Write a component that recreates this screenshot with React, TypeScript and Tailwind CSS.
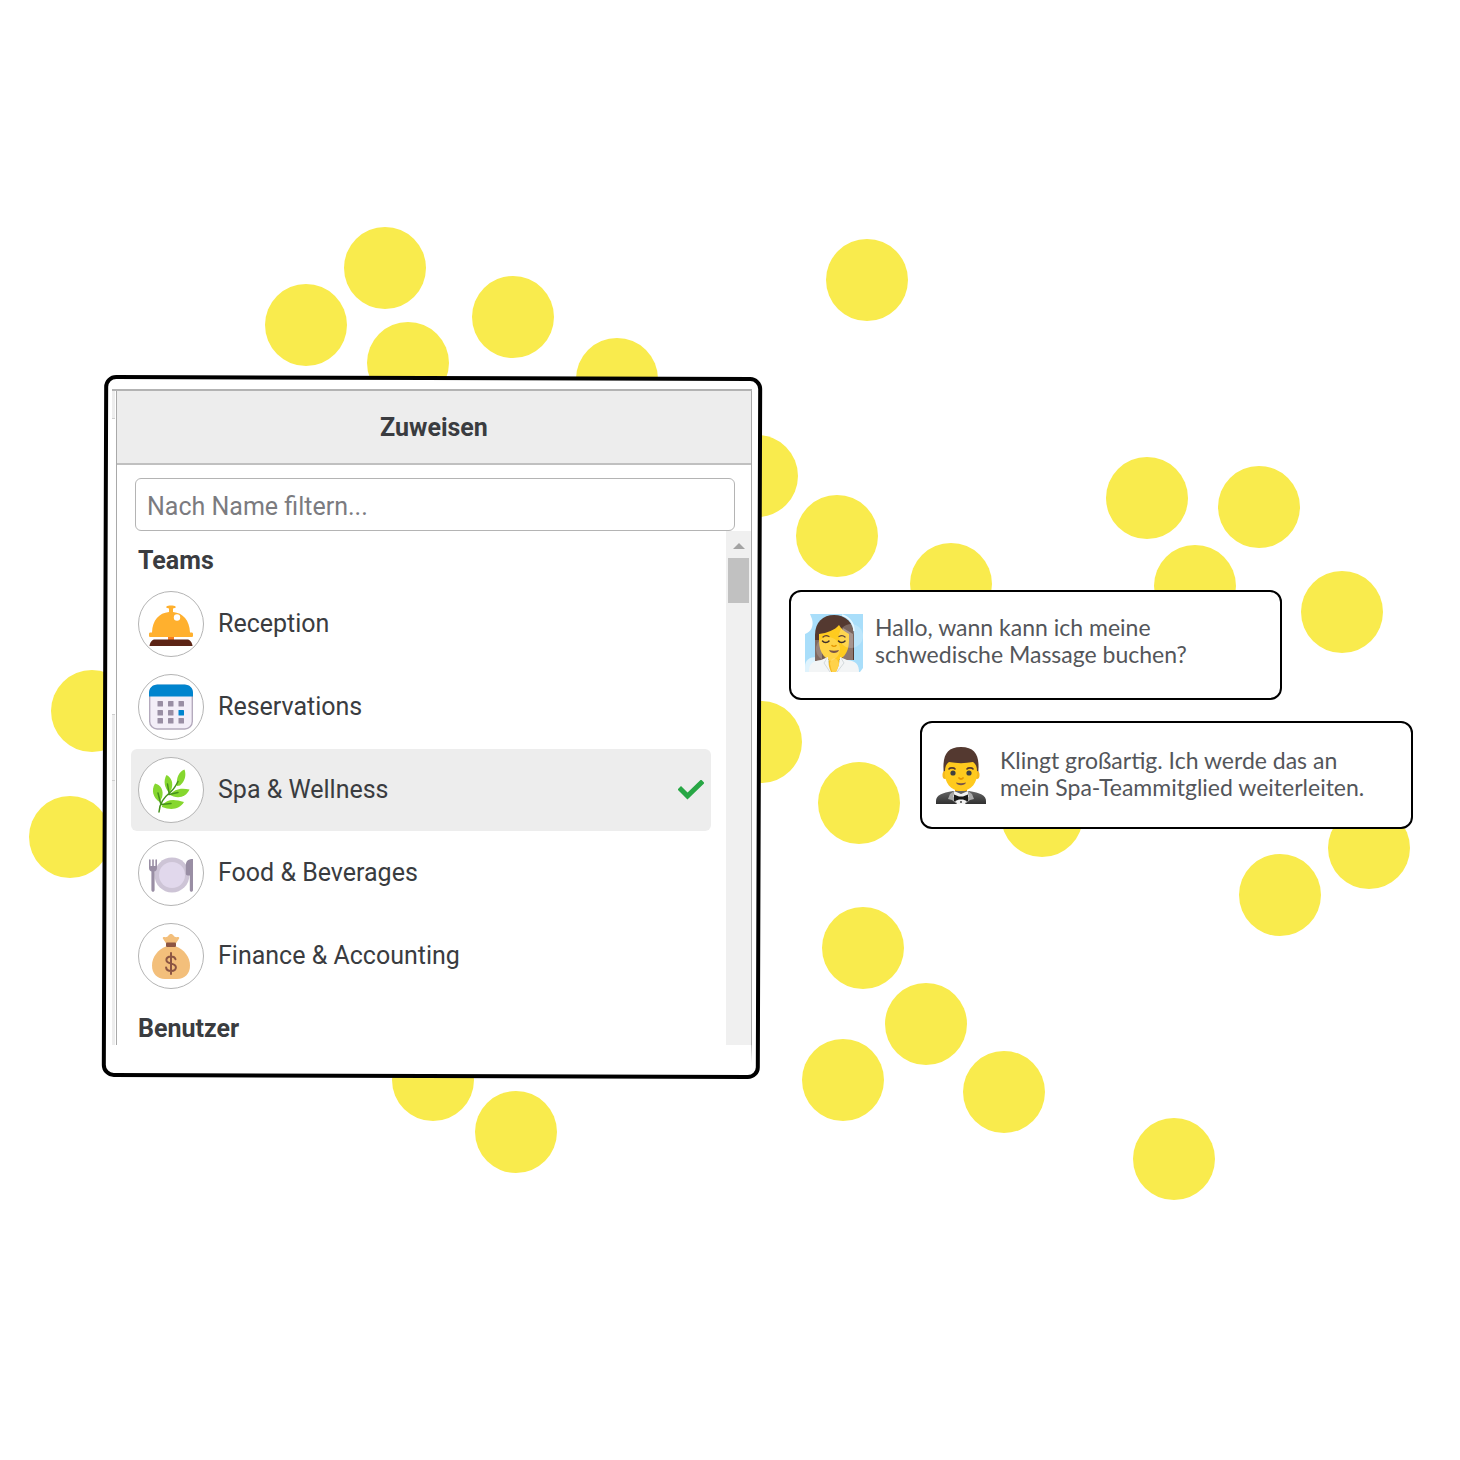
import { useState } from 'react'
import type { ReactNode } from 'react'

const dots = [
  [385, 268], [306, 325], [408, 363], [513, 317], [617, 379], [867, 280], [757, 476],
  [837, 536], [951, 584], [1147, 498], [1259, 507], [1195, 586], [1342, 612], [92, 711],
  [70, 837], [761, 742], [859, 803], [1042, 816], [1280, 895], [1369, 848], [863, 948],
  [926, 1024], [843, 1080], [1004, 1092], [1174, 1159], [433, 1080], [516, 1132],
]

function BellIcon() {
  return (
    <svg viewBox="0 0 44 44" className="size-11" aria-hidden="true">
      <path d="M19 34h6v5h-6z" fill="#f57c20" />
      <path d="M5 37.500h34c2 0 4.500 4 4.500 6.500H.5c0-2.500 2.500-6.500 4.500-6.500z" fill="#5c2415" />
      <path
        d="M17.500 4.500c1.500-1.300 7.500-1.300 9 0 .6.600.2 1.300-.8 1.500l-1.700.5v3.500c10 1 16.500 8 17 20.500h1.500c1 0 1.500.5 1.500 1.500v1.500c0 1-.5 1.500-1.500 1.500h-41C.5 35 0 34.500 0 33.500V32c0-1 .5-1.500 1.500-1.500H3C3.500 18 10 11 20 10V6.500L18.300 6c-1-.2-1.400-.9-.8-1.500z"
        fill="#ffb02e"
      />
      <circle cx="28" cy="15.500" r="3.200" fill="#fff" />
    </svg>
  )
}

function CalendarIcon() {
  return (
    <svg viewBox="0 0 44 46" className="h-[46px] w-11" aria-hidden="true">
      <rect x=".7" y="1.500" width="42.600" height="43.500" rx="7.500" fill="#f3eef8" stroke="#b4aabd" strokeWidth="1.400" />
      <path d="M0 12.500V9c0-5 3.500-8.500 8.500-8.500h27C40.500.5 44 4 44 9v3.500z" fill="#0084ce" />
      {[17, 26, 34].map((y) =>
        [8.5, 19, 29.5].map((x) => (
          <rect key={`${x}-${y}`} x={x} y={y} width="5.500" height="5.500" rx=".6" fill={x === 29.5 && y === 26 ? '#0084ce' : '#998ea4'} />
        )),
      )}
    </svg>
  )
}

function HerbIcon() {
  return (
    <svg viewBox="0 0 44 48" className="h-12 w-11" aria-hidden="true">
      <g fill="#86d72f">
        <path d="M10.500 36C4 32 2 24 6 17.500c6 1.500 9 7 7 14z" />
        <path d="M20.500 27c-5-5-6.500-12-3-18 5 2.500 7 8 5 14z" />
        <path d="M28 20c-1-8 1.500-14 7.500-16.500 2 5.500.5 11.500-4.500 16z" />
        <path d="M21 29c4-5.500 10-7.500 19.500-5.500-3 6.500-9 9-16 7z" />
        <path d="M13 39.500c5-6 11-7 22-3.500-4.500 7.500-13 8.500-22 5z" />
      </g>
      <path d="M10 46c.5-9 5-14.500 12-20.500 3.500-3 5-6 7-10M9 27l2.500 10M18.500 18l1.500 9M20 28.500l9-2M12 38.500l10-1" fill="none" stroke="#44911b" strokeWidth="1.500" strokeLinecap="round" />
    </svg>
  )
}

function PlateIcon() {
  return (
    <svg viewBox="0 0 44 40" className="h-10 w-11" aria-hidden="true">
      <circle cx="23" cy="22" r="17.500" fill="#cdc4d6" />
      <circle cx="23" cy="22" r="13" fill="#e1d8ec" />
      <path d="M0 7c0-1 1.600-1 1.600 0v6h1.600V7c0-1 1.600-1 1.600 0v6h1.600V7c0-1 1.600-1 1.600 0v8c0 1.800-1 3-2.400 3.500V37c0 2.400-3.200 2.400-3.200 0V18.500C1 18 0 16.800 0 15z" fill="#998ea4" />
      <path d="M44 37c0 2.400-3.200 2.400-3.200 0V22.500h-2c-1.300 0-2-.8-2-2v-7C36.800 8 38.500 6 44 6z" fill="#998ea4" />
    </svg>
  )
}

function MoneyBagIcon() {
  return (
    <svg viewBox="0 0 38 45" className="h-[45px] w-[38px]" aria-hidden="true">
      <path d="M12 3c2 .3 3.500.2 4.500-1.500 1.200-2 3.800-2 5 0C22.500 3.200 24 3.300 26 3c1.300-.2 1.600 1 .8 2l-3.300 5h-9l-3.300-5C10.400 4 10.700 2.800 12 3z" fill="#f3bf7b" />
      <path d="M14 12.500h10C32 15.500 38 23 38 31.500 38 39.500 33 45 25 45H13C5 45 0 39.500 0 31.500 0 23 6 15.500 14 12.500z" fill="#f3bf7b" />
      <rect x="14" y="8.500" width="10" height="4.500" rx="1" fill="#8c5543" />
      <path d="M23.500 25.200c-.5-1.700-2.300-2.700-4.500-2.700-2.700 0-4.600 1.300-4.600 3.500 0 5 9.500 2.200 9.500 7.300 0 2.300-2 3.700-4.800 3.700s-4.700-1.300-5-3.500M19 19v21" fill="none" stroke="#8c5543" strokeWidth="2" strokeLinecap="round" />
    </svg>
  )
}

function SpaGuest() {
  return (
    <svg viewBox="0 0 58 58" className="size-[58px] shrink-0" aria-hidden="true">
      <path d="M5 0h53v54l-3 4H0V20C6 18 9 12 7 5z" fill="#a9defa" />
      <path d="M0 53c0-7 4-10 12-10v15H0z" fill="#dff3fd" />
      <path d="M10 46V21C10 8 18 1 29 1s20 7 20 20v25z" fill="#543930" />
      <path d="M48 20v26H38V14z" fill="#8d7770" />
      <path d="M10 26h7v21h-7z" fill="#806961" />
      <path d="M24 39h10l1 19H23z" fill="#f5b91f" />
      <path d="M14 20c8-1 16-4 20-9 2 4 6 7 10 9v7c0 12-7 20-15 20S14 39 14 27z" fill="#ffcb1f" />
      <path d="M4 58c0-8 3-11 12-12l7-3c0 6 1 11 3 15zM54 58c0-8-3-11-12-12l-7-3c0 6-2 11-4 15z" fill="#f3f5f6" />
      <path d="M22 44l-3 5 6 9M36 44l3 5-7 9" fill="none" stroke="#d3d9dc" strokeWidth="1" />
      <path d="M25 50c0-3 1-5 4-6 3 1 5 3 5 7l-3 7h-4z" fill="#ffd24a" />
      <circle cx="46" cy="22" r="12" fill="#fff" opacity=".22" />
      <circle cx="23" cy="35" r="12" fill="#fff" opacity=".18" />
      <path d="M18 23c1.500-1.500 4-1.700 6-.5M34 22.500c2-1.200 4.500-1 6 .5" fill="none" stroke="#5d4037" strokeWidth="1.300" strokeLinecap="round" />
      <path d="M17.500 27c1.500 2 5 2 6.500 0M33.500 27c1.500 2 5 2 6.500 0" fill="none" stroke="#3f312b" strokeWidth="1.500" strokeLinecap="round" />
      <path d="M27 31.500c1 1 3 1 4 0" fill="none" stroke="#e59600" strokeWidth="1.600" strokeLinecap="round" />
      <path d="M24 36c3 1 7 1 10 0-1 4-9 4-10 0z" fill="#795548" />
      <path d="M37 1c7 2 12 8 12 16" fill="none" stroke="#e9f8ff" strokeWidth="1.500" />
    </svg>
  )
}

function Concierge() {
  return (
    <svg viewBox="0 0 50 57" className="h-[57px] w-[50px] shrink-0" aria-hidden="true">
      <defs>
        <linearGradient id="suit" x1="0" y1="0" x2="0" y2="1">
          <stop offset="0" stopColor="#666" />
          <stop offset="1" stopColor="#303030" />
        </linearGradient>
      </defs>
      <path d="M8 28C6 11 9 0 25 0s19 11 17 28z" fill="#543930" />
      <path d="M19 38h12v12H19z" fill="#e59600" />
      <ellipse cx="9" cy="28" rx="2.500" ry="4" fill="#f5b91f" />
      <ellipse cx="41" cy="28" rx="2.500" ry="4" fill="#f5b91f" />
      <path d="M9 24c0-4 1-7 4-9 8 1.500 16 1.500 24 0 3 2 4 5 4 9 1 12-6 20-16 20S8 36 9 24z" fill="#ffca1e" />
      <path d="M13 22c1-1.500 5-1.500 6 0M31 22c1-1.500 5-1.500 6 0" fill="none" stroke="#543930" strokeWidth="1.600" strokeLinecap="round" />
      <circle cx="17" cy="26" r="2.600" fill="#404040" />
      <circle cx="33" cy="26" r="2.600" fill="#404040" />
      <path d="M23 31c1 1.300 3 1.300 4 0" fill="none" stroke="#e59600" strokeWidth="1.800" strokeLinecap="round" />
      <path d="M20 35.500c3 1 7 1 10 0-1 3.700-9 3.700-10 0z" fill="#795548" />
      <path d="M0 57v-3c0-6 6-8 17-10h16c11 2 17 4 17 10v3z" fill="url(#suit)" />
      <path d="M18 44l7 3 7-3 1 6-4 7h-8l-4-7z" fill="#f3f3f3" />
      <path d="M18 44l-4 3-2 5 4 1 5 4-4-8zM32 44l4 3 2 5-4 1-5 4 4-8z" fill="#a9a9a9" />
      <path d="M18 47.500l5 2h4l5-2v7l-5-2h-4l-5 2z" fill="#181818" />
      <circle cx="25" cy="55" r="1" fill="#444" />
    </svg>
  )
}

const teams: { name: string; icon: ReactNode }[] = [
  { name: 'Reception', icon: <BellIcon /> },
  { name: 'Reservations', icon: <CalendarIcon /> },
  { name: 'Spa & Wellness', icon: <HerbIcon /> },
  { name: 'Food & Beverages', icon: <PlateIcon /> },
  { name: 'Finance & Accounting', icon: <MoneyBagIcon /> },
]

function AssignPanel() {
  const [selected, setSelected] = useState('Spa & Wellness')
  const [filter, setFilter] = useState('')

  const visible = teams.filter((t) => t.name.toLowerCase().includes(filter.toLowerCase()))

  return (
    <section className="relative w-full max-w-[660px] px-2.5 pt-[13px] pb-[33px] font-[Roboto,sans-serif] text-[25px] text-[#3a3c40]">
      {/* Slightly tilted frame behind the panel */}
      <div className="absolute inset-x-px inset-y-0 rotate-[0.2deg] rounded-xl border-4 border-black bg-white" />

      <div className="relative border-t-2 border-[#b3b3b3] pl-1">
        {/* Page edge that shows beside the panel */}
        <div className="absolute inset-y-0 left-0 flex w-[3px] flex-col">
          <div className="h-7 border-b border-[#cfcfcf] bg-[#ededed]" />
          <div className="h-[295px]" />
          <div className="h-[67px] border-y border-[#cfcfcf] bg-[#ededed]" />
          <div className="flex-1 bg-[#ededed]" />
        </div>
        {/* The right edge fades out below the list */}
        <div className="absolute top-full right-0 h-[18px] w-px bg-gradient-to-b from-[#b9b9b9] to-white" />

        <div className="border-x border-[#a9a9a9]">
          <h1 className="border-b-2 border-[#c0c0c0] bg-[#ededed] pt-[21px] pb-[19px] text-center leading-8 font-bold">
            Zuweisen
          </h1>

          <div className="pt-[13px] pr-4 pl-[18px]">
            <input
              type="text"
              aria-label="Nach Name filtern"
              placeholder="Nach Name filtern..."
              value={filter}
              onChange={(e) => setFilter(e.target.value)}
              className="block h-[53px] w-full rounded-md border border-[#b4b4b4] bg-white px-[11px] pt-1 outline-none placeholder:text-[#7b7b7f]"
            />
          </div>

          <div className="flex">
            <div className="min-w-0 flex-1 pr-[15px] pl-3.5">
              <h2 className="px-[7px] pt-3.5 pb-1.5 leading-8 font-bold">Teams</h2>
              <ul className="flex flex-col gap-px">
                {visible.map((team) => (
                  <li key={team.name}>
                    <button
                      type="button"
                      aria-pressed={selected === team.name}
                      onClick={() => setSelected(team.name)}
                      className={`flex h-[82px] w-full items-center gap-3.5 rounded-md px-[7px] text-left ${
                        selected === team.name ? 'bg-[#ededed]' : ''
                      }`}
                    >
                      <span className="flex size-[66px] shrink-0 items-center justify-center rounded-full border border-[#b4b4b4] bg-white">
                        {team.icon}
                      </span>
                      <span className="flex-1">{team.name}</span>
                      {selected === team.name && (
                        <svg viewBox="0 0 26 20" className="h-5 w-[26px]" aria-hidden="true">
                          <path d="M3 9.500l6.500 6.500L23 3" fill="none" stroke="#28a745" strokeWidth="5" strokeLinecap="square" />
                        </svg>
                      )}
                    </button>
                  </li>
                ))}
              </ul>
              <h2 className="px-[7px] pt-4 leading-8 font-bold">Benutzer</h2>
            </div>

            <div className="flex w-[25px] flex-col items-center bg-[#f0f0f0]">
              <svg viewBox="0 0 12 6" className="mt-3 h-1.5 w-3" aria-hidden="true">
                <path d="M0 6l6-6 6 6z" fill="#a3a3a3" />
              </svg>
              <div className="mt-[9px] h-[45px] w-[21px] bg-[#c1c1c1]" />
            </div>
          </div>
        </div>
      </div>
    </section>
  )
}

function Message({ avatar, className, children }: { avatar: ReactNode; className: string; children: ReactNode }) {
  return (
    <div className={`flex w-full max-w-[493px] rounded-xl border-2 border-black bg-white px-3.5 ${className}`}>
      {avatar}
      <p>{children}</p>
    </div>
  )
}

export default function App() {
  return (
    <main className="relative min-h-screen overflow-hidden bg-white">
      <svg width="1460" height="1460" className="absolute top-0 left-0" aria-hidden="true">
        {dots.map(([cx, cy]) => (
          <circle key={`${cx}-${cy}`} cx={cx} cy={cy} r="41" fill="#f9eb4d" />
        ))}
      </svg>

      <div className="relative flex items-start gap-[27px] pt-[376px] pr-[47px] pl-[102px]">
        <AssignPanel />
        <div className="mt-[214px] flex min-w-0 flex-1 flex-col gap-[21px] font-[Lato,sans-serif] text-[23px] leading-[27px] text-[#54565a]">
          <Message avatar={<SpaGuest />} className="gap-3 self-start pt-[22px] pb-[26px]">
            Hallo, wann kann ich meine
            <br />
            schwedische Massage buchen?
          </Message>
          <Message avatar={<Concierge />} className="gap-3.5 self-end pt-6 pb-[23px]">
            Klingt großartig. Ich werde das an
            <br />
            mein Spa-Teammitglied weiterleiten.
          </Message>
        </div>
      </div>
    </main>
  )
}
